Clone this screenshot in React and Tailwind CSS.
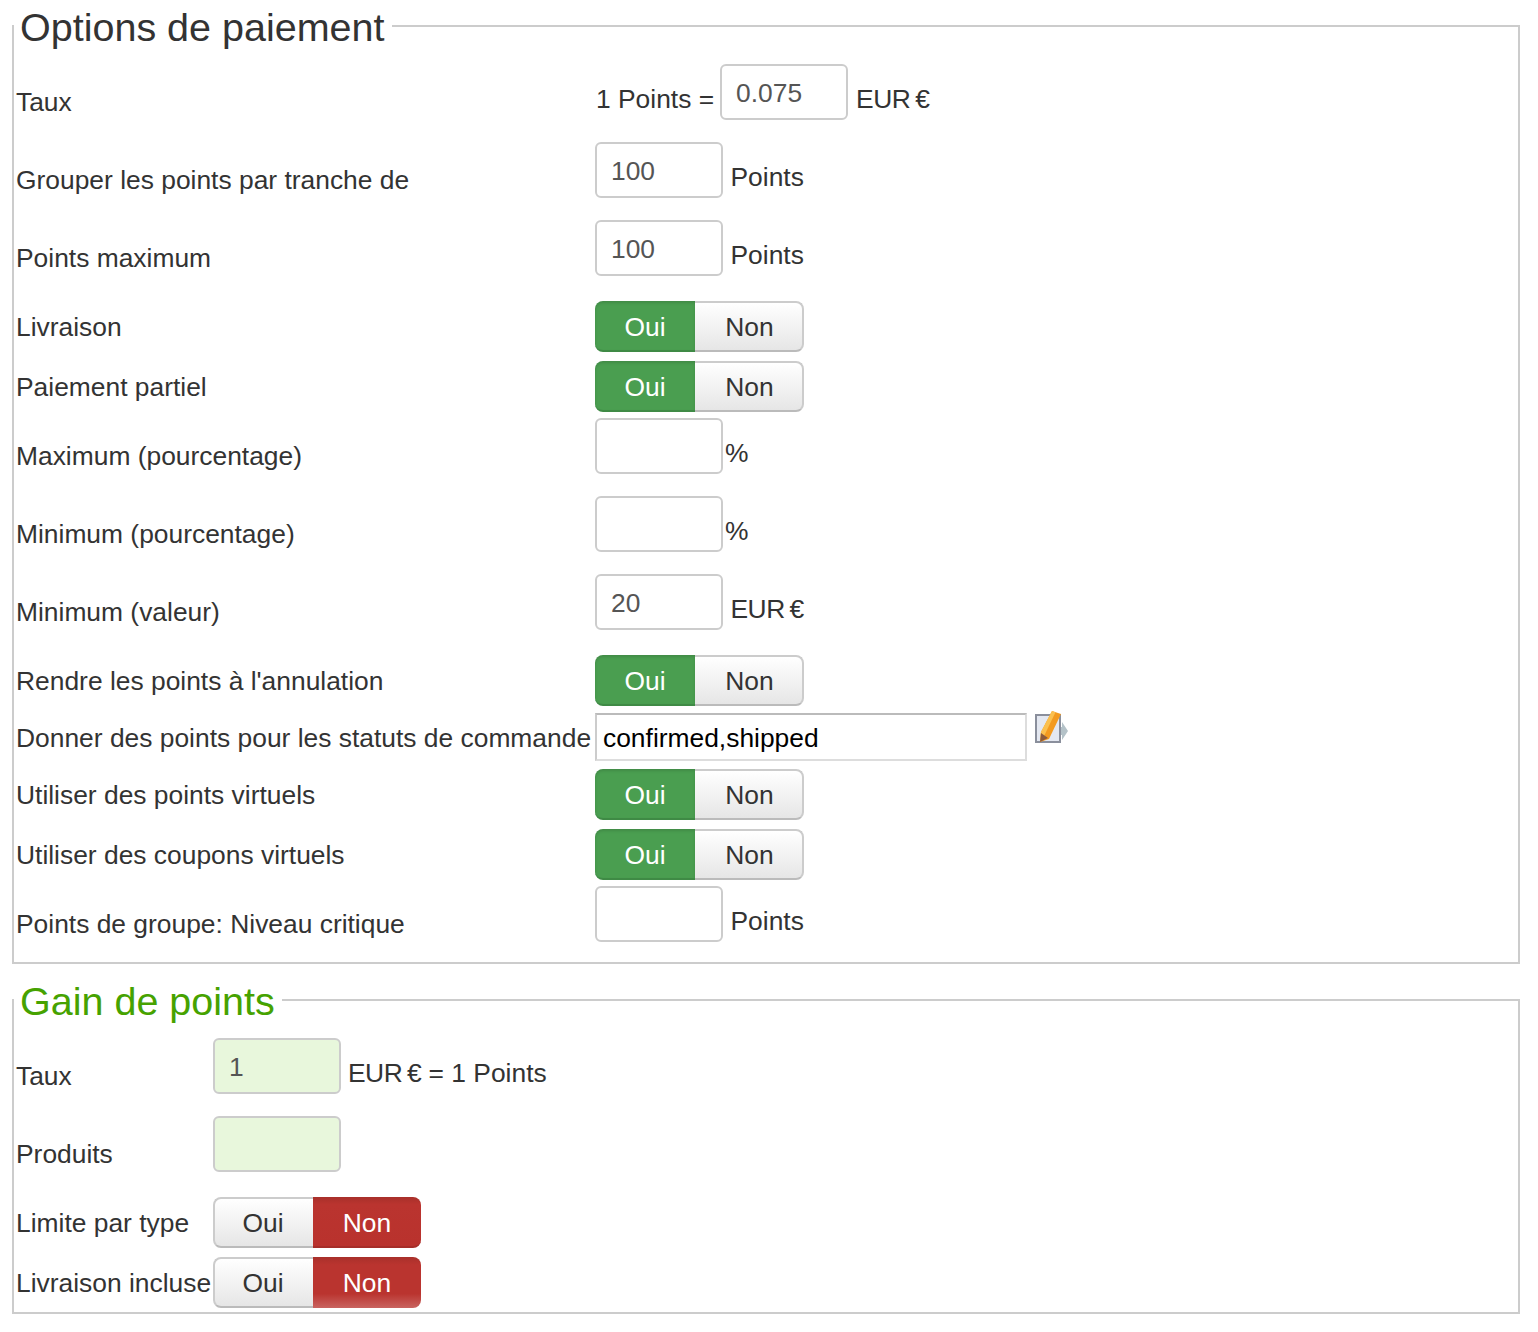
const font = { fontFamily: '"Liberation Sans", Arial, sans-serif' };

function Input({ value = "", green = false }) {
  return (
    <input
      readOnly
      value={value}
      className={[
        "w-[128px] h-[56px] shrink-0 rounded-[6px] border-2 border-[#ccc] pl-[14px] pt-[2px] text-[26.4px] text-[#555] outline-none",
        green ? "bg-[#e8f7dc]" : "bg-white"
      ].join(" ")}
    />
  );
}

function Toggle({ value }) {
  const isYes = value === "yes";
  return (
    <div className="flex w-fit h-[51px] mt-[3px] text-[26.4px]">
      <div
        className={
          isYes
            ? "w-[100px] pt-[2px] flex items-center justify-center rounded-l-[8px] bg-[#4a9e50] border-b-2 border-b-[#3f8a45] shadow-[inset_0_2px_3px_rgba(0,0,0,0.12)] text-white"
            : "w-[100px] pr-[2px] flex items-center justify-center rounded-l-[8px] bg-gradient-to-b from-white to-[#e6e6e6] border-2 border-r-0 border-[#ccc] border-b-[#bbb] text-[#333]"
        }
      >
        Oui
      </div>
      <div
        className={
          isYes
            ? "w-[109px] pl-[2px] flex items-center justify-center rounded-r-[8px] bg-gradient-to-b from-white to-[#e6e6e6] border-2 border-l-0 border-[#ccc] border-b-[#bbb] text-[#333]"
            : value === "noFade"
              ? "w-[108px] flex items-center justify-center rounded-r-[8px] bg-[linear-gradient(#a8302a,#ba342f_15%,#ba342f_72%,#c96460)] text-white"
              : "w-[108px] pt-[2px] flex items-center justify-center rounded-r-[8px] bg-[linear-gradient(#a8302a,#ba342f_15%,#b9322d)] border-b-2 border-b-[#a62d28] text-white"
        }
      >
        Non
      </div>
    </div>
  );
}

function EditIcon() {
  return (
    <svg width="34" height="34" viewBox="0 0 34 34" className="shrink-0 ml-[8px] -mt-[1px]">
      <path d="M24 16h3v-5l6 9-6 9v-5h-3z" fill="#b4c2c8" />
      <rect x="1" y="4" width="24" height="27" fill="#e4e8f1" stroke="#8a8f9c" strokeWidth="2" />
      <path d="M17 0l9 3-12 25-9 3 1-10z" fill="#f39a1f" />
      <path d="M17 0l3.500 1.200-12 25-3.500 4.800 1-10z" fill="#fbc04f" />
      <path d="M6 22l7 5-8 4z" fill="#8c5a3c" />
    </svg>
  );
}

function Eur() {
  return <span className="[word-spacing:-2px] tracking-[-0.5px]">EUR €</span>;
}

function Row({ label, labelWidth, height, children, labelClass = "mt-[24px]" }) {
  return (
    <div className="flex items-start whitespace-nowrap" style={{ height }}>
      <div className={labelClass} style={{ width: labelWidth }}>
        {label}
      </div>
      {children}
    </div>
  );
}

function InputRow({ label, labelWidth, value, unit, green, height = 78, tight = false }) {
  return (
    <Row label={label} labelWidth={labelWidth} height={height}>
      <Input value={value} green={green} />
      <span className={["mt-[21px]", tight ? "ml-[2px]" : "ml-[7.500px]"].join(" ")}>{unit}</span>
    </Row>
  );
}

function ToggleRow({ label, labelWidth, value, height = 60 }) {
  return (
    <Row label={label} labelWidth={labelWidth} height={height} labelClass="mt-[15px]">
      <Toggle value={value} />
    </Row>
  );
}

function Box({ title, titleColor, children, className }) {
  return (
    <fieldset className={["border-2 border-[#ccc] px-[2px] ml-[12px] mr-[18px]", className].join(" ")}>
      <legend className={["-ml-[2px] pl-[6px] pr-[7px] h-[40px] text-[39.5px] leading-[42px]", titleColor].join(" ")}>
        {title}
      </legend>
      <div className="pt-[18px] leading-[28px]">{children}</div>
    </fieldset>
  );
}

export default function App() {
  const w1 = 579;
  const w2 = 197;

  return (
    <div className="w-[1538px] h-[1332px] bg-white text-[26.4px] text-[#333] pt-[6px]" style={font}>
      <Box title="Options de paiement" titleColor="text-[#333]">
        <Row label="Taux" labelWidth={w1} height={78}>
          <span className="mt-[21px] ml-[1px] mr-[6px]">1 Points =</span>
          <Input value="0.075" />
          <span className="mt-[21px] ml-[8px]"><Eur /></span>
        </Row>
        <InputRow label="Grouper les points par tranche de" labelWidth={w1} value="100" unit="Points" />
        <InputRow label="Points maximum" labelWidth={w1} value="100" unit="Points" />
        <ToggleRow label="Livraison" labelWidth={w1} value="yes" />
        <ToggleRow label="Paiement partiel" labelWidth={w1} value="yes" />
        <InputRow label="Maximum (pourcentage)" labelWidth={w1} unit="%" tight />
        <InputRow label="Minimum (pourcentage)" labelWidth={w1} unit="%" tight />
        <InputRow label="Minimum (valeur)" labelWidth={w1} value="20" unit={<Eur />} />
        <ToggleRow label="Rendre les points à l'annulation" labelWidth={w1} value="yes" />
        <div className="flex items-center h-[54px] whitespace-nowrap">
          <div className="w-[579px] pb-[2px]">Donner des points pour les statuts de commande</div>
          <input
            readOnly
            value="confirmed,shipped"
            className="w-[432px] h-[48px] self-start mt-[1px] border-2 border-[#ddd] border-t-[#bbb] border-l-[#ccc] pl-[6px] pt-[2px] text-[26.4px] text-black outline-none"
          />
          <div className="self-start"><EditIcon /></div>
        </div>
        <ToggleRow label="Utiliser des points virtuels" labelWidth={w1} value="yes" />
        <ToggleRow label="Utiliser des coupons virtuels" labelWidth={w1} value="yes" />
        <InputRow label="Points de groupe: Niveau critique" labelWidth={w1} unit="Points" height={76} />
      </Box>

      <Box title="Gain de points" titleColor="text-[#46a200]" className="mt-[16px]">
        <Row label="Taux" labelWidth={w2} height={78}>
          <Input value="1" green />
          <span className="mt-[21px] ml-[7px]"><Eur /> = 1 Points</span>
        </Row>
        <Row label="Produits" labelWidth={w2} height={78}>
          <Input green />
        </Row>
        <ToggleRow label="Limite par type" labelWidth={w2} value="no" />
        <ToggleRow label="Livraison incluse" labelWidth={w2} value="noFade" height={58} />
      </Box>
    </div>
  );
}
